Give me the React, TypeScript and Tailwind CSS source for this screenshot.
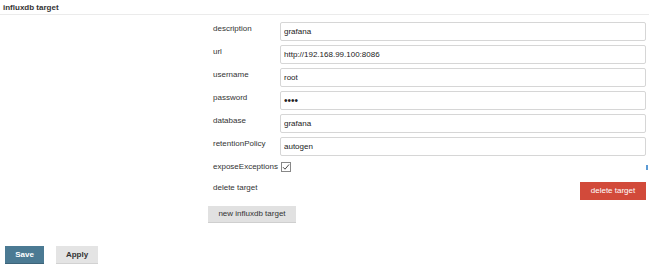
import React from "react";

const fields = [
  { label: "description", value: "grafana", type: "text" },
  { label: "url", value: "http://192.168.99.100:8086", type: "text" },
  { label: "username", value: "root", type: "text" },
  { label: "password", value: "root", type: "password" },
  { label: "database", value: "grafana", type: "text" },
  { label: "retentionPolicy", value: "autogen", type: "text" },
];

const App: React.FC = () => {
  return (
    <div className="w-[649px] h-[274px] bg-white text-[8px] leading-[10px] text-[#333] font-['Liberation_Sans',Arial,sans-serif]">
      <div className="h-[15px] border-b border-[#ebebeb] pl-[3px] pt-[3px] font-bold">
        influxdb target
      </div>

      <div className="pl-[213px] pr-[3px] pt-[7px] flex flex-col">
        <div className="flex flex-col gap-[4px]">
          {fields.map((f) => (
            <div key={f.label} className="flex items-start">
              <span className="w-[67px] pt-[2px]">{f.label}</span>
              <input
                type={f.type}
                defaultValue={f.value}
                readOnly
                className={`flex-1 h-[19px] border border-[#d6d6d6] rounded-[2px] px-[3px] text-[#222] outline-none ${
                  f.type === "password" ? "text-[10px]" : "text-[8px]"
                }`}
              />
            </div>
          ))}
        </div>

        <div className="flex items-center mt-[6px] h-[10px]">
          <span>exposeExceptions</span>
          <span className="ml-[3px] w-[10px] h-[10px] border border-[#888] flex items-center justify-center">
            <svg width="8" height="8" viewBox="0 0 8 8">
              <path d="M1 4.2 L3 6.2 L7 1.5" fill="none" stroke="#333" strokeWidth="0.9" />
            </svg>
          </span>
          <span className="ml-auto mr-[-2px] w-[2px] h-[5px] bg-[#5b9bd5]" />
        </div>

        <div className="flex items-start justify-between mt-[10px]">
          <span className="pt-[1px]">delete target</span>
          <button className="w-[66px] h-[18px] bg-[#d24a3a] text-white text-[8px]">
            delete target
          </button>
        </div>

        <div className="mt-[6px] -ml-[5px]">
          <button className="w-[88px] h-[17px] bg-[#e1e1e1] border-b border-[#cfcfcf] text-[#333] text-[8px]">
            new influxdb target
          </button>
        </div>
      </div>

      <div className="flex gap-[12px] pl-[5px] mt-[23px]">
        <button className="w-[39px] h-[18px] bg-[#4b7a93] text-white text-[8px] font-bold border-b border-[#3d6479]">
          Save
        </button>
        <button className="w-[42px] h-[18px] bg-[#e4e4e4] text-[#333] text-[8px] font-bold border-b border-[#d2d2d2]">
          Apply
        </button>
      </div>
    </div>
  );
};

export default App;
